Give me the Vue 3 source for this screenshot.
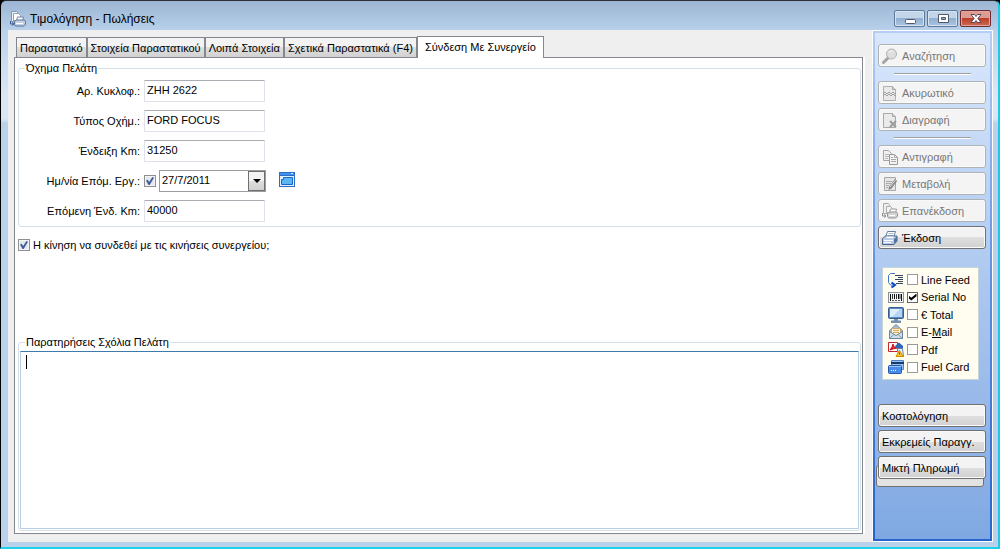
<script setup>
import { ref } from 'vue'

const tabs = ['Παραστατικό', 'Στοιχεία Παραστατικού', 'Λοιπά Στοιχεία', 'Σχετικά Παραστατικά (F4)', 'Σύνδεση Με Συνεργείο']
const active = ref(4)

const plate = ref('ΖΗΗ 2622')
const model = ref('FORD FOCUS')
const km = ref('31250')
const serviceDate = ref('27/7/2011')
const nextKm = ref('40000')
const remind = ref(true)
const linked = ref(true)
const notes = ref('')

const groups = [
  [{ icon: 'search', label: 'Αναζήτηση' }],
  [{ icon: 'cancel', label: 'Ακυρωτικό' }, { icon: 'delete', label: 'Διαγραφή' }],
  [
    { icon: 'copy', label: 'Αντιγραφή' },
    { icon: 'edit', label: 'Μεταβολή' },
    { icon: 'reissue', label: 'Επανέκδοση' },
    { icon: 'print', label: 'Έκδοση', enabled: true },
  ],
]

const options = ref([
  { icon: 'feed', pre: 'Line Feed', on: false },
  { icon: 'barcode', pre: 'Serial No', on: true },
  { icon: 'screen', pre: '€ Total', on: false },
  { icon: 'mail', pre: 'E-', key: 'M', post: 'ail', on: false },
  { icon: 'pdf', pre: 'Pdf', on: false },
  { icon: 'card', pre: 'Fuel Card', on: false },
])
</script>

<template>
  <div class="window">
    <header class="titlebar">
      <svg class="app-icon" viewBox="0 0 16 16" aria-hidden="true">
        <path d="M1.500 .5h5l2 2v8h-7z" fill="#eef3f9" stroke="#8296b4" />
        <path d="M3.500 2.500h5l2 2v5h-7z" fill="#fff" stroke="#8da0bb" />
        <path d="M0.500 10v3h3M2 11.500l2 1.500-2 1.500" fill="none" stroke="#3e5d91" />
        <path d="M7.500 6h6l-1 4h-6z" fill="#fff" stroke="#7388a8" />
        <path d="M4.500 10.500l2-1.500h8l1 1.500v3l-2 1.500h-8l-1-1.500z" fill="#c3d1e4" stroke="#5b7195" />
        <path d="M6 12.500h7" stroke="#fff" />
      </svg>
      <h1>Τιμολόγηση - Πωλήσεις</h1>
      <div class="win-buttons">
        <button type="button" aria-label="Ελαχιστοποίηση">
          <svg viewBox="0 0 16 14"><rect x="3.500" y="7.500" width="10" height="4" rx="1" fill="#fff" stroke="#50586a" /></svg>
        </button>
        <button type="button" aria-label="Μεγιστοποίηση">
          <svg viewBox="0 0 16 14"><path fill-rule="evenodd" d="M3.500 2.500h10v8h-10zM6.500 5.500v2h4v-2z" fill="#fff" stroke="#50586a" /></svg>
        </button>
        <button type="button" class="close" aria-label="Κλείσιμο">
          <svg viewBox="0 0 16 14"><path d="M3 2.500h3.500L8 4.500l1.500-2H13L9.900 6.500 13 10.500H9.500L8 8.500l-1.500 2H3L6.100 6.500z" fill="#fff" stroke="#594a5c" /></svg>
        </button>
      </div>
    </header>

    <div class="body">
      <main class="main">
        <div class="tabs" role="tablist">
          <button
            v-for="(t, i) in tabs"
            :key="t"
            type="button"
            role="tab"
            class="tab"
            :class="{ active: i === active }"
            :aria-selected="i === active"
            @click="active = i"
          >{{ t }}</button>
        </div>

        <section class="page">
          <fieldset class="vehicle">
            <legend>Όχημα Πελάτη</legend>
            <div class="row">
              <label for="plate">Αρ. Κυκλοφ.:</label>
              <input id="plate" v-model="plate" class="text" type="text" />
            </div>
            <div class="row">
              <label for="model">Τύπος Οχήμ.:</label>
              <input id="model" v-model="model" class="text" type="text" />
            </div>
            <div class="row">
              <label for="km">Ένδειξη Km:</label>
              <input id="km" v-model="km" class="text" type="text" />
            </div>
            <div class="row">
              <label for="date">Ημ/νία Επόμ. Εργ.:</label>
              <div class="date-line">
                <input v-model="remind" class="check" type="checkbox" aria-label="Ημ/νία Επόμ. Εργ." />
                <div class="date-box">
                  <input id="date" v-model="serviceDate" type="text" />
                  <button type="button" aria-label="Ημερολόγιο"><svg viewBox="0 0 8 4"><path d="M0 0h8L4 4z" /></svg></button>
                </div>
                <button type="button" class="open" aria-label="Άνοιγμα">
                  <svg viewBox="0 0 16 15">
                    <rect width="16" height="15" fill="#2c6cc8" />
                    <rect x="1" y="1" width="14" height="2" fill="#3f93f0" />
                    <rect x="12" y="1" width="2" height="1" fill="#d8ecff" />
                    <rect x="1" y="4" width="14" height="10" fill="#e3f1ff" />
                    <path d="M2.500 12.500v-5h2v-2h9v7z" fill="#5cb6f5" stroke="#1768c8" />
                  </svg>
                </button>
              </div>
            </div>
            <div class="row">
              <label for="nextkm">Επόμενη Ένδ. Km:</label>
              <input id="nextkm" v-model="nextKm" class="text" type="text" />
            </div>
          </fieldset>

          <label class="link-row">
            <input v-model="linked" class="check" type="checkbox" />
            <span>Η κίνηση να συνδεθεί με τις κινήσεις συνεργείου;</span>
          </label>

          <fieldset class="notes">
            <legend>Παρατηρήσεις Σχόλια Πελάτη</legend>
            <div class="notes-box">
              <textarea v-model="notes" aria-label="Παρατηρήσεις Σχόλια Πελάτη"></textarea>
              <i v-if="!notes" class="caret"></i>
            </div>
          </fieldset>
        </section>
      </main>

      <aside class="side">
        <div class="side-inner">
          <template v-for="(g, gi) in groups" :key="gi">
            <hr v-if="gi" />
            <div class="group">
              <button v-for="b in g" :key="b.label" type="button" class="btn" :disabled="!b.enabled">
                <svg viewBox="0 0 16 16" aria-hidden="true">
                  <g v-if="b.icon === 'search'">
                    <path d="M1.500 14.500l5-5" stroke="#a4a4a4" stroke-width="3" stroke-linecap="round" />
                    <circle cx="9.500" cy="6" r="5" fill="#dedede" stroke="#b0b0b0" />
                    <path d="M7 5q1-2.500 4-2" fill="none" stroke="#f8f8f8" />
                  </g>
                  <g v-else-if="b.icon === 'cancel'">
                    <path d="M1.500 1.500h9l3 3v11h-12z" fill="#e9e9e9" stroke="#b0b0b0" />
                    <path d="M10.500 1.500v3h3" fill="#ccc" stroke="#a9a9a9" />
                    <path d="M1 9l2-2 2 2 2-2 2 2 2-2 2 2 1-1M1 11l2-2 2 2 2-2 2 2 2-2 2 2 1-1" fill="none" stroke="#a0a0a0" />
                  </g>
                  <g v-else-if="b.icon === 'delete'">
                    <path d="M1.500 1.500h9l3 3v11h-12z" fill="#eaeaea" stroke="#a9a9a9" />
                    <path d="M10.500 1.500v3h3" fill="#ccc" stroke="#a9a9a9" />
                    <path d="M8 9l6 6M14 9l-6 6" stroke="#9c9c9c" stroke-width="2" />
                  </g>
                  <g v-else-if="b.icon === 'copy'">
                    <path d="M1.500 1.500h5l3 3v7h-8z" fill="#f0f0f0" stroke="#a6a6a6" />
                    <path d="M3 5.500h4M3 7.500h4M3 9.500h3" stroke="#b5b5b5" />
                    <path d="M7.500 5.500h5l3 3v7h-8z" fill="#f3f3f3" stroke="#999" />
                    <path d="M12.500 5.500v3h3M9 8.500h2M9 10.500h5M9 12.500h5" fill="none" stroke="#aaa" />
                  </g>
                  <g v-else-if="b.icon === 'edit'">
                    <path d="M2.500 1.500h11v13h-11z" fill="#e6e6e6" stroke="#a6a6a6" />
                    <path d="M4 5.500h6M4 7.500h5M4 9.500h3M4 11.500h2" stroke="#aaa" />
                    <path d="M8 12l6-8" stroke="#888" stroke-width="3" />
                    <path d="M8 11l5.500-7" stroke="#ddd" />
                    <path d="M6.500 14l.5-3 2 1.500z" fill="#777" />
                  </g>
                  <g v-else-if="b.icon === 'reissue'">
                    <path d="M1.500 .5h5l1.500 2v8h-6.500z" fill="#eee" stroke="#aaa" />
                    <path d="M4.500 3.500h4l2 2v4h-6z" fill="#f5f5f5" stroke="#aaa" />
                    <path d="M.5 10v3h3M2 11.500l2 1.500-2 1.500" fill="none" stroke="#8c8c8c" />
                    <path d="M8.500 6h6l-1 4h-6z" fill="#fafafa" stroke="#a0a0a0" />
                    <path d="M5.500 10.500l2-1.500h7l1 1.500v3l-2 1.500h-7l-1-1.500z" fill="#d4d4d4" stroke="#939393" />
                    <path d="M7 12.500h6" stroke="#fff" />
                  </g>
                  <g v-else>
                    <path d="M5.500 1.500h8l-2 6h-8z" fill="#fff" stroke="#6c7f9e" />
                    <path d="M6.500 3.500h5M6 5.500h5" stroke="#a8bbd6" />
                    <path d="M.5 8.500l3-2.500h11.500v5l-3 3.500h-11.500z" fill="#b9cae4" stroke="#4b638c" />
                    <path d="M12 14l3-3.500v-4l-3 2.500z" fill="#54719f" />
                    <path d="M4 8l.5-1.500h7.500l-1 1.500z" fill="#fff" />
                    <path d="M2 10.500h9M2 12.500h7" stroke="#f8fbff" />
                  </g>
                </svg>
                <span>{{ b.label }}</span>
              </button>
            </div>
          </template>

          <div class="options">
            <label v-for="o in options" :key="o.icon">
              <svg viewBox="0 0 16 16" aria-hidden="true">
                <g v-if="o.icon === 'feed'">
                  <path d="M7 1.500H2.500L.5 3.500v7l2 2.500H5" fill="none" stroke="#3f79c4" />
                  <path d="M3.500 10.500L7 13l-3.500 2.500" fill="none" stroke="#0d45c8" stroke-width="2" />
                  <path d="M7 3.500h8M10 5.500h5M7 7.500h8M10 9.500h5M8 11.500h7" stroke="#35475f" />
                </g>
                <g v-else-if="o.icon === 'barcode'">
                  <rect x=".5" y="3.500" width="15" height="10" fill="#f2f4f6" stroke="#8993a0" />
                  <path d="M2.500 5v7M6.500 5v5M10.500 5v5M13.500 5v7" stroke="#111" />
                  <path d="M4.500 5v5M8.500 5v5M12 5v5" stroke="#333" />
                  <path d="M4 11.500h8" stroke="#555" stroke-dasharray="2 1" />
                </g>
                <g v-else-if="o.icon === 'screen'">
                  <rect x=".5" y=".5" width="15" height="11" rx="1" fill="#5d88bd" stroke="#385d92" />
                  <rect x="2" y="2" width="12" height="8" fill="#b4d6f4" />
                  <path d="M2 2h10L4 10H2z" fill="#dceefb" />
                  <path d="M6 12h4v1.500h3V16H3v-2.500h3z" fill="#7891b0" />
                </g>
                <g v-else-if="o.icon === 'mail'">
                  <path d="M1.500 6.500L8 .5l6.500 6v8h-13z" fill="#a9bfd4" stroke="#70869d" />
                  <path d="M3.500 4.500h9v7h-9z" fill="#fff4da" stroke="#c9a66a" />
                  <path d="M5 6.500h6M5 8.500h6" stroke="#dca657" />
                  <path d="M1.500 7.500L8 11.500l6.500-4v7h-13z" fill="#cfdeeb" stroke="#70869d" />
                  <path d="M1.500 14.500L6 10.500M14.500 14.500L10 10.500" stroke="#8498ae" />
                </g>
                <g v-else-if="o.icon === 'pdf'">
                  <path d="M.5 .5h9v9h-9z" fill="#fff" stroke="#c3262c" />
                  <path d="M2 8q3-2 3-6 0 4 4 4-4 0-7 2" fill="none" stroke="#cc1c25" stroke-width="1.500" />
                  <path d="M7 4l4-3.500 4 3.500v3h-3l-2-1H8z" fill="#2c68b7" />
                  <path d="M9.500 6.500h5l1 8h-5z" fill="#e8eef7" stroke="#6784ad" />
                  <path d="M11.500 8.500l3.500 6H8z" fill="#ffca2e" stroke="#d48a00" />
                  <path d="M11.500 10.500v2" stroke="#7b4a00" />
                </g>
                <g v-else>
                  <path d="M3.500 1.500h12v9h-12z" fill="#9bc3f0" stroke="#4f81c4" />
                  <path d="M3 4h13" stroke="#17396c" stroke-width="2" />
                  <rect x=".5" y="6.500" width="13" height="8" rx="1" fill="#4a8be8" stroke="#2359b3" />
                  <path d="M1 7.500h12" stroke="#9bc7fb" />
                  <path d="M3 11.500h6" stroke="#fff" stroke-dasharray="1 1" />
                </g>
              </svg>
              <input v-model="o.on" type="checkbox" />
              <span>{{ o.pre }}<u v-if="o.key">{{ o.key }}</u>{{ o.post }}</span>
            </label>
          </div>

          <div class="group actions">
            <button type="button" class="btn">Κοστολόγηση</button>
            <button type="button" class="btn">Εκκρεμείς Παραγγ.</button>
            <div class="stack">
              <div class="under"></div>
              <button type="button" class="btn">Μικτή Πληρωμή</button>
            </div>
          </div>
        </div>
      </aside>
    </div>
  </div>
</template>

<style>
body {
  margin: 0;
  background: #000;
}
</style>

<style scoped>
* {
  box-sizing: border-box;
}

.window {
  display: flex;
  flex-direction: column;
  min-height: 100vh;
  padding: 0 5px 5px 7px;
  border: 1px solid #2b2d38;
  border-right: 2px solid #1fc9e2;
  border-bottom: 2px solid #1fd0ea;
  border-left-color: #000;
  border-radius: 6px 6px 0 0;
  background: linear-gradient(#9bb5d3, #b9d1ea 30px, #d8e6f5 90px, #d8e6f5 118px, #b9d1ea 122px);
  font: 11px/14px "Liberation Sans", Arial, sans-serif;
  color: #000;
}

button,
input,
textarea {
  margin: 0;
  font: inherit;
  color: inherit;
}

.titlebar {
  display: flex;
  align-items: center;
  height: 29px;
  padding: 6px 2px 0;
}

.app-icon {
  width: 16px;
  height: 16px;
  margin-right: 4px;
}

h1 {
  flex: 1;
  margin: 0;
  font-size: 12px;
  font-weight: 400;
}

.win-buttons {
  display: flex;
  gap: 2px;
}

.win-buttons button {
  display: grid;
  place-items: center;
  width: 31px;
  height: 17px;
  padding: 0;
  border: 1px solid #5d7898;
  border-radius: 2px;
  background: linear-gradient(#c3d5e9 45%, #91afd0 50%, #abc5e1);
  box-shadow: inset 0 0 0 1px #d5e4f2;
}

.win-buttons .close {
  border-color: #6b2c35;
  background: linear-gradient(#dc9c92 45%, #bb3e2a 50%, #cf6b50);
  box-shadow: inset 0 0 0 1px #e2a59b;
}

.win-buttons svg {
  width: 16px;
  height: 14px;
}

.body {
  flex: 1;
  display: flex;
  background: #efefef;
}

.main {
  flex: 1;
  display: flex;
  flex-direction: column;
  padding: 6px 9px 8px 6px;
}

.tabs {
  display: flex;
  align-items: flex-end;
  padding-left: 2px;
}

.tab {
  height: 20px;
  padding: 0 3px;
  border: 1px solid #85878f;
  border-bottom: 0;
  background: linear-gradient(#f3f3f3 50%, #dfdfdf 50%, #d2d2d2);
  white-space: nowrap;
}

.tab.active {
  z-index: 1;
  height: 22px;
  margin-bottom: -1px;
  padding: 0 7px 2px;
  background: #fff;
}

.page {
  flex: 1;
  display: flex;
  flex-direction: column;
  padding: 3px 1px 2px 3px;
  border: 1px solid #85878f;
  background: #fff;
  box-shadow: 2px 0 #fff;
}

fieldset {
  min-width: 0;
  margin: 0;
  border: 1px solid #d5dfe8;
  border-radius: 3px;
}

legend {
  margin-left: 6px;
  padding: 0 1px;
}

.vehicle {
  display: flex;
  flex-direction: column;
  gap: 8px;
  padding: 5px 0 4px;
}

.row {
  display: grid;
  grid-template-columns: 121px 1fr;
  column-gap: 4px;
  align-items: center;
  height: 22px;
}

.row > label {
  text-align: right;
  white-space: nowrap;
}

.text {
  width: 121px;
  height: 22px;
  padding: 0 2px 3px;
  border: 1px solid #dfe2ea;
  border-top-color: #abadb3;
  border-radius: 1px;
  outline: 0;
}

.date-line {
  display: flex;
  align-items: center;
}

.check {
  appearance: none;
  display: grid;
  place-items: center;
  flex: none;
  width: 12px;
  height: 12px;
  border: 1px solid #8e8f8f;
  background: #e4e8ee;
  box-shadow: inset 0 0 0 1px #f4f4f4;
}

.check:checked::before {
  content: "";
  width: 8px;
  height: 8px;
  background: #3f5a9c;
  clip-path: polygon(0 45%, 20% 35%, 40% 62%, 80% 0, 100% 8%, 45% 100%, 32% 100%);
}

.date-box {
  display: flex;
  width: 107px;
  height: 22px;
  margin: 0 13px 0 3px;
  border: 1px solid #9a9ca2;
}

.date-box input {
  flex: 1;
  min-width: 0;
  padding: 0 2px 2px;
  border: 0;
  outline: 0;
}

.date-box button {
  display: grid;
  place-items: center;
  width: 17px;
  padding: 0;
  border: 1px solid #707070;
  background: linear-gradient(#f3f3f3 50%, #dedede 50%, #d0d0d0);
}

.date-box svg {
  width: 8px;
  height: 4px;
}

.open {
  padding: 0 0 4px;
  border: 0;
  background: none;
}

.open svg {
  display: block;
  width: 16px;
  height: 15px;
}

.link-row {
  display: flex;
  align-items: center;
  gap: 3px;
  margin: 11px 0 83px;
}

.notes {
  flex: 1;
  display: flex;
  flex-direction: column;
  padding: 2px 1px 1px;
}

.notes legend {
  margin-left: 5px;
}

.notes-box {
  position: relative;
  flex: 1;
  display: flex;
}

textarea {
  flex: 1;
  min-height: 100px;
  padding: 2px 5px;
  border: 1px solid #b5cfe7;
  border-top-color: #3d7bad;
  outline: 0;
  resize: none;
}

.caret {
  position: absolute;
  top: 4px;
  left: 6px;
  width: 1px;
  height: 14px;
  background: #000;
}

.side {
  display: flex;
  width: 121px;
  padding: 2px;
  border: 1px solid #fff;
  background: linear-gradient(#b5cef6, #5b8de2 50%, #2464cc);
}

.side-inner {
  flex: 1;
  display: flex;
  flex-direction: column;
  gap: 6px;
  padding: 11px 4px 11px 3px;
  background: linear-gradient(#d9e7fc, #7fa8e2);
}

.group {
  display: flex;
  flex-direction: column;
  gap: 4px;
}

.side hr {
  width: 77px;
  height: 2px;
  margin: 0 auto;
  border: solid #a0a0a0;
  border-width: 1px 0 0;
  background: #fff;
}

.btn {
  display: flex;
  align-items: center;
  gap: 4px;
  width: 100%;
  height: 23px;
  padding: 0 3px;
  border: 1px solid #707070;
  border-radius: 3px;
  background: linear-gradient(#f3f3f3 50%, #dfdfdf 50%, #d1d1d1);
  box-shadow: inset 0 0 0 1px #fafafa;
  white-space: nowrap;
}

.btn:disabled {
  border-color: #adb2b5;
  background: #f4f4f4;
  color: #777;
}

.btn svg {
  flex: none;
  width: 16px;
  height: 16px;
}

.options {
  margin: 12px 7px 18px 4px;
  padding: 3px 5px;
  border: 1px solid #c9d3da;
  background: #fffcf0;
}

.options label {
  display: flex;
  align-items: center;
  gap: 3px;
  height: 17px;
}

.options label:nth-child(even) {
  height: 18px;
}

.options svg {
  width: 16px;
  height: 16px;
}

.options input {
  appearance: none;
  display: grid;
  place-items: center;
  flex: none;
  width: 11px;
  height: 11px;
  border: 1px solid #9a9a9a;
  background: #fff;
}

.options input:checked {
  border-color: #666;
}

.options input:checked::before {
  content: "";
  width: 8px;
  height: 7px;
  background: #000;
  clip-path: polygon(0 30%, 35% 62%, 100% 0, 100% 38%, 35% 100%, 0 68%);
}

.actions {
  gap: 3px;
}

.stack {
  position: relative;
}

.stack .btn {
  position: relative;
}

.under {
  position: absolute;
  inset: 9px 2px -8px -2px;
  border: 1px solid #707070;
  border-radius: 3px;
  background: #e2e2e2;
}
</style>
